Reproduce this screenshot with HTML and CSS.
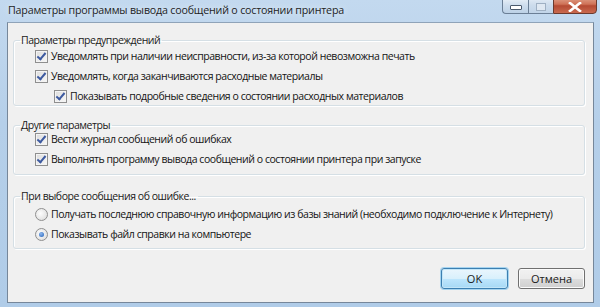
FILE: index.html
```html
<!DOCTYPE html>
<html lang="ru">
<head>
  <meta charset="UTF-8">
  <title>Параметры программы вывода сообщений о состоянии принтера</title>
  <link rel="stylesheet" href="styles.css">
</head>
<body>
  <div class="window">
    <div class="titlebar">
      <span class="title">Параметры программы вывода сообщений о состоянии принтера</span>
      <div class="caption-buttons">
        <span class="cap-btn cap-min"><span class="min-bar"></span></span>
        <span class="cap-btn cap-max"><span class="max-box"></span></span>
        <span class="cap-btn cap-close">
          <svg width="14" height="10" viewBox="0 0 14 10"><path d="M2 1 L12 9 M12 1 L2 9" stroke="#fff" stroke-width="2.6" stroke-linecap="square"/></svg>
        </span>
      </div>
    </div>

    <div class="client">
      <fieldset class="group group-warn">
        <legend>Параметры предупреждений</legend>
        <div class="row"><span class="check on"></span>Уведомлять при наличии неисправности, из-за которой невозможна печать</div>
        <div class="row"><span class="check on"></span>Уведомлять, когда заканчиваются расходные материалы</div>
        <div class="row sub"><span class="check on"></span>Показывать подробные сведения о состоянии расходных материалов</div>
      </fieldset>

      <fieldset class="group group-other">
        <legend>Другие параметры</legend>
        <div class="row"><span class="check on"></span>Вести журнал сообщений об ошибках</div>
        <div class="row"><span class="check on"></span>Выполнять программу вывода сообщений о состоянии принтера при запуске</div>
      </fieldset>

      <fieldset class="group group-error">
        <legend>При выборе сообщения об ошибке...</legend>
        <div class="row"><span class="radio"></span>Получать последнюю справочную информацию из базы знаний (необходимо подключение к Интернету)</div>
        <div class="row"><span class="radio on"></span>Показывать файл справки на компьютере</div>
      </fieldset>

      <div class="buttons">
        <button class="btn btn-default">OK</button>
        <button class="btn">Отмена</button>
      </div>
    </div>
  </div>
</body>
</html>
```

FILE: styles.css
```css
html, body {
  margin: 0;
  padding: 0;
}
body {
  width: 600px;
  height: 307px;
  overflow: hidden;
  font-family: 'Open Sans', 'Noto Sans', sans-serif;
  font-size: 10.5px;
  letter-spacing: -0.45px;
  color: #000;
}
.window {
  width: 600px;
  height: 307px;
  box-sizing: border-box;
  background: linear-gradient(to bottom, #c3d9ef, #b5cfe9 40%, #b0cce8);
  padding: 0 6px 4px 7px;
  display: flex;
  flex-direction: column;
}
.titlebar {
  height: 22px;
  display: flex;
  justify-content: space-between;
  align-items: flex-start;
}
.title {
  margin-left: 1px;
  margin-top: 3px;
  font-size: 10.7px;
  letter-spacing: -0.2px;
  color: #1e1e1e;
  text-shadow: 0 0 6px #e8f2fb;
}
.caption-buttons {
  display: flex;
  margin-right: -3px;
}
.cap-btn {
  height: 18px;
  margin-top: -4px;
  box-sizing: border-box;
  border: 1px solid #6b7f96;
  display: flex;
  align-items: center;
  justify-content: center;
  padding-top: 4px;
}
.cap-min {
  width: 26px;
  border-radius: 0 0 0 4px;
  border-right: none;
  background: linear-gradient(to bottom, #eef4fa, #cfdeee 50%, #bcd1e6);
}
.cap-max {
  width: 25px;
  border-right: none;
  background: linear-gradient(to bottom, #e6eef7, #cddcec 50%, #c1d4e8);
}
.cap-close {
  width: 44px;
  border-radius: 0 0 4px 0;
  border-color: #6b3a2e;
  background: linear-gradient(to bottom, #e2a58f, #cf7257 45%, #b54a33 55%, #c96a4f);
}
.min-bar {
  width: 10px;
  height: 3px;
  background: #fff;
  border: 1px solid #4b5a6d;
  border-radius: 1px;
}
.max-box {
  width: 8px;
  height: 6px;
  border: 1px solid #9fb0c3;
  background: #dfe8f2;
}
.client {
  flex: 1;
  background: #f0f0f0;
  border: 1px solid #76879a;
  border-top-color: #8fa3b8;
  padding: 9px 8px 0 5px;
  display: flex;
  flex-direction: column;
}
.group {
  margin: 0;
  border: 1px solid #d5dfe5;
  border-radius: 3px;
  box-shadow: inset 1px 1px 0 #fff, 1px 1px 0 #fff;
  padding: 0 0 0 21px;
  min-width: 0;
}
.group legend {
  padding: 0 2px 0 1px;
  margin-left: -15px;
  line-height: 16px;
  color: #1a1a1a;
}
.group-warn {
  height: 72px;
}
.group-warn .row:first-of-type {
  margin-top: -2px;
}
.group-other {
  margin-top: 11px;
  height: 56px;
}
.group-other .row:first-of-type {
  margin-top: -4px;
}
.group-error {
  margin-top: 13px;
  height: 59px;
}
.row {
  height: 20px;
  display: flex;
  align-items: center;
  white-space: nowrap;
  color: #141414;
}
.row.sub {
  padding-left: 19px;
}
.check {
  width: 11px;
  height: 11px;
  border: 1px solid #8f8f8f;
  margin-right: 3px;
  flex-shrink: 0;
  background: linear-gradient(135deg, #dcdcdc, #f8f8f8);
  box-shadow: inset 0 0 0 1px #f4f4f4;
  position: relative;
}
.check.on::after {
  content: "";
  position: absolute;
  left: 3px;
  top: 0px;
  width: 3px;
  height: 7px;
  border: solid #3d5aa0;
  border-width: 0 2px 2px 0;
  transform: rotate(40deg);
}
.radio {
  width: 11px;
  height: 11px;
  border: 1px solid #8f8f8f;
  border-radius: 50%;
  margin-right: 3px;
  flex-shrink: 0;
  background: radial-gradient(circle at 40% 40%, #fdfdfd, #d8d8d8);
  position: relative;
}
.radio.on::after {
  content: "";
  position: absolute;
  left: 3px;
  top: 3px;
  width: 5px;
  height: 5px;
  border-radius: 50%;
  background: radial-gradient(circle at 40% 35%, #8fb8ee, #1f5fb8);
}
.buttons {
  display: flex;
  justify-content: flex-end;
  gap: 10px;
  margin-top: auto;
  margin-bottom: 13px;
}
.btn {
  width: 67px;
  height: 21px;
  font-family: inherit;
  font-size: 11px;
  color: #1a1a1a;
  border: 1px solid #707070;
  border-radius: 3px;
  background: linear-gradient(to bottom, #f2f2f2, #ebebeb 50%, #dddddd 51%, #cfcfcf);
  box-shadow: inset 0 0 0 1px #fbfbfb;
  padding: 0;
}
.btn-default {
  border-color: #3c7fb1;
  background: linear-gradient(to bottom, #eaf6fd, #d9f0fc 50%, #bee6fd 51%, #a7d9f5);
  box-shadow: inset 0 0 0 1px #c3e6f8, 0 0 0 1px #a6d4ef;
}
```
